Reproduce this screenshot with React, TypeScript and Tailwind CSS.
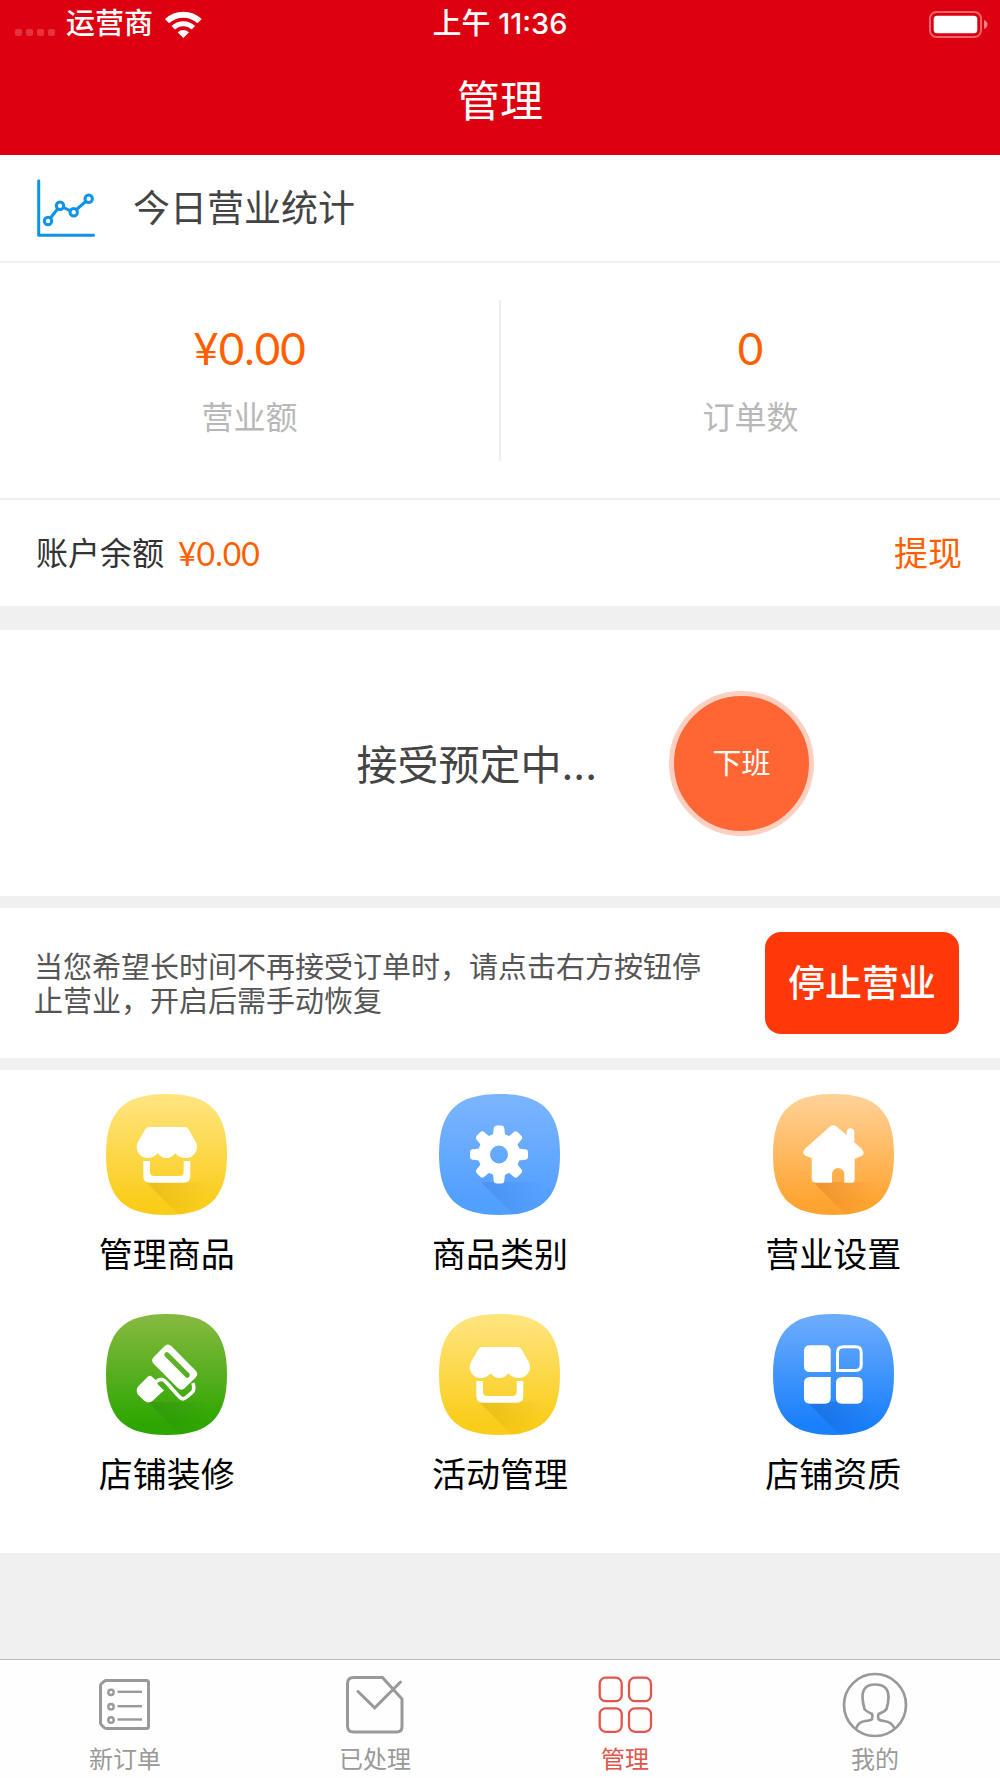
import type { ReactNode } from 'react'

const SQUIRCLE =
  'M60.5 0C103.5 0 121 17.5 121 60.5C121 103.5 103.5 121 60.5 121C17.5 121 0 103.5 0 60.5C0 17.5 17.5 0 60.5 0Z'

/** Rounded gradient tile with the long shadow that falls to the lower right of
    its glyph. `id` keeps the gradient ids unique, the shop tile shows up twice. */
function Tile(props: { id: string; from: string; to: string; shade: string; shadowX: number; children: ReactNode }) {
  const { id, from, to, shade, shadowX, children } = props
  return (
    <svg viewBox="0 0 121 121" className="size-[121px]" aria-hidden="true">
      <defs>
        <linearGradient id={`${id}-bg`} x1="0" y1="0" x2="0" y2="1">
          <stop offset="0.05" stopColor={from} />
          <stop offset="0.9" stopColor={to} />
        </linearGradient>
        <linearGradient id={`${id}-sh`} gradientUnits="userSpaceOnUse" x1="48" y1="86" x2="100" y2="104">
          <stop offset="0" stopColor={shade} stopOpacity="0.45" />
          <stop offset="1" stopColor={shade} stopOpacity="0" />
        </linearGradient>
        <clipPath id={`${id}-clip`}>
          <path d={SQUIRCLE} />
        </clipPath>
      </defs>
      <path d={SQUIRCLE} fill={`url(#${id}-bg)`} />
      <path d={`M${shadowX} 88L${shadowX + 33} 121H121V88Z`} fill={`url(#${id}-sh)`} clipPath={`url(#${id}-clip)`} />
      {children}
    </svg>
  )
}

function ShopTile({ id }: { id: string }) {
  return (
    <Tile id={id} from="#ffe47c" to="#f9cd1a" shade="#d9a90c" shadowX={40}>
      <path
        d="M43 33H78.500Q81 33 82.300 35L89.500 47.500Q91 50 91 53A11 11 0 0 1 80 64Q73 64 69.300 59.300Q66 64 60.500 64Q55 64 51.700 59.300Q48 64 41.500 64A11 11 0 0 1 30.700 53Q30.700 50 32.200 47.500L39.500 35Q40.800 33 43 33Z"
        fill="#fff"
      />
      <path
        d="M37.300 67H44V77.500Q44 82 48.500 82H73.200Q77.700 82 77.700 77.500V67H84.300V82.500Q84.300 88.700 78 88.700H43.600Q37.300 88.700 37.300 82.500Z"
        fill="#fff"
      />
    </Tile>
  )
}

function GearTile() {
  return (
    <Tile id="gear" from="#7ab4ff" to="#519fff" shade="#3b82dd" shadowX={42}>
      <circle cx="60" cy="60.500" r="15" fill="none" stroke="#fff" strokeWidth="12" />
      {[0, 45, 90, 135, 180, 225, 270, 315].map((deg) => (
        <path
          key={deg}
          d="M52.500 42.500Q54 41.500 54.200 39L54.700 34Q55 31.500 57.500 31.500H62.500Q65 31.500 65.300 34L65.800 39Q66 41.500 67.500 42.500L65 48H55Z"
          transform={`rotate(${deg} 60 60.5)`}
          fill="#fff"
        />
      ))}
    </Tile>
  )
}

function HouseTile() {
  return (
    <Tile id="house" from="#ffd094" to="#ffa430" shade="#d97f1e" shadowX={40}>
      <path
        d="M57.300 32.300Q60.300 30 63.300 32.300L73.700 41.300V38A3.800 3.800 0 0 1 81.300 38V48.300L89 55.200Q92.500 59.500 88.500 62L81.700 64.700V85.500Q81.700 88.700 78.500 88.700H71.300V80.200A6.150 6.150 0 0 0 59 80.200V88.700H43Q38.700 88.700 38.700 84.500V64L33 62Q28 59 32 54.700Z"
        fill="#fff"
      />
    </Tile>
  )
}

function RollerTile() {
  return (
    <Tile id="roller" from="#83b93e" to="#2ea602" shade="#2c8a10" shadowX={42}>
      <path
        transform="translate(68.700 53.200) rotate(45)"
        fillRule="evenodd"
        fill="#fff"
        d="M-17 -12.500H17Q22 -12.500 22 -7.500V7.500Q22 12.500 17 12.500H-17Q-22 12.500 -22 7.500V-7.500Q-22 -12.500 -17 -12.500ZM-14.500 -5.800A2.500 2.500 0 0 0 -14.500 -0.800H14.500A2.500 2.500 0 0 0 14.500 -5.800Z"
      />
      <path
        d="M51 67Q56 63.500 59.500 67.500L73 82.500Q76.500 86.500 80 83.500L86 78.500Q89 75.500 87 69"
        fill="none"
        stroke="#fff"
        strokeWidth="3.600"
      />
      <path
        d="M42 62.500Q44.300 60.800 46.300 63L49 65.500L52 67L51.500 70L58 76.500L55 79L47 86.500Q42.700 90.500 38 86.500L32.500 81Q28.500 76 33 71.500Z"
        fill="#fff"
      />
    </Tile>
  )
}

function BlocksTile() {
  return (
    <Tile id="blocks" from="#6aabfd" to="#1a80fb" shade="#1360cc" shadowX={34}>
      <path d="M37 31.300H52Q57.700 31.300 57.700 37V58H37Q31 58 31 52V37Q31 31.300 37 31.300Z" fill="#fff" />
      <path
        d="M70.500 32.800H82.500Q88.200 32.800 88.200 38.500V50.800Q88.200 56.500 82.500 56.500H64.500V38.500Q64.500 32.800 70.500 32.800Z"
        fill="none"
        stroke="#fff"
        strokeWidth="3"
      />
      <path d="M37 63H57.700V84Q57.700 89.700 52 89.700H37Q31 89.700 31 84V69Q31 63 37 63Z" fill="#fff" />
      <path d="M69 63H84Q89.700 63 89.700 69V84Q89.700 89.700 84 89.700H69Q63 89.700 63 84V69Q63 63 69 63Z" fill="#fff" />
    </Tile>
  )
}

const entries = [
  { label: '管理商品', icon: <ShopTile id="goods" /> },
  { label: '商品类别', icon: <GearTile /> },
  { label: '营业设置', icon: <HouseTile /> },
  { label: '店铺装修', icon: <RollerTile /> },
  { label: '活动管理', icon: <ShopTile id="events" /> },
  { label: '店铺资质', icon: <BlocksTile /> },
]

const tabs = [
  {
    label: '新订单',
    icon: (
      <>
        <path
          d="M14.500 8.500H54.500Q56.500 8.500 56.500 10.500V54.500Q56.500 56.500 54.500 56.500H14.500Q13 56.500 12 55.500L9.500 53Q8.500 52 8.500 50.500V14Q8.500 12.500 9.500 11.500L12 9.500Q13 8.500 14.500 8.500Z"
          strokeWidth="3"
        />
        {[20.300, 34.700, 48].map((y) => (
          <g key={y} strokeWidth="2.400">
            <circle cx="19" cy={y} r="2.700" />
            <path d={`M25.500 ${y - 0.500}H50`} />
          </g>
        ))}
      </>
    ),
  },
  {
    label: '已处理',
    icon: (
      <g strokeWidth="3">
        <path d="M11.500 5.500H40.500L60 27V54.500Q60 60 54.500 60H11.500Q5.500 60 5.500 54V11.500Q5.500 5.500 11.500 5.500Z" />
        <path d="M16 19.500L32.700 35.800L58.500 10" strokeLinecap="round" />
      </g>
    ),
  },
  {
    label: '管理',
    icon: (
      <g strokeWidth="2.300">
        <rect x="7.700" y="5.700" width="22" height="23.500" rx="6" />
        <rect x="37" y="5.700" width="22" height="23.500" rx="6" />
        <rect x="7.700" y="36.300" width="22" height="23.500" rx="6" />
        <rect x="37" y="36.300" width="22" height="23.500" rx="6" />
      </g>
    ),
  },
  {
    label: '我的',
    icon: (
      <g strokeWidth="2.700">
        <circle cx="33" cy="33" r="31" />
        <path d="M14 57Q16 50 23 49Q29 48.500 30 47Q31 44 30 42Q23.500 39 22.500 37Q20.500 30 20.500 25Q20.500 12.500 33 12.500Q46.500 12.500 46.500 25Q46.500 31 44.500 37Q43 39.500 36.500 42Q35.500 44 36.500 47Q37.500 48.500 42 49Q50.500 50 52.500 57" />
      </g>
    ),
  },
]

function StatusBar() {
  return (
    <div className="grid h-12 grid-cols-3 items-center text-[29px] leading-8 font-medium">
      <div className="flex items-center pl-[15px]">
        <span className="flex gap-1 pt-4">
          {[0, 1, 2, 3].map((i) => (
            <i key={i} className="size-[7px] rounded-[2px] bg-white/20" />
          ))}
        </span>
        <span className="ml-[11px]">运营商</span>
        <svg viewBox="0 0 37 27" className="ml-3 h-[27px] w-[37px]" aria-hidden="true">
          <g fill="none" stroke="#fff" strokeWidth="6">
            <path d="M2 10.200A23.600 23.600 0 0 1 34.600 10.200" />
            <path d="M8.200 16.800A14.500 14.500 0 0 1 28.400 16.800" strokeWidth="5" />
          </g>
          <path d="M18.300 27L12.700 21.400A8 8 0 0 1 23.900 21.400Z" fill="#fff" />
        </svg>
      </div>
      <time className="text-center">上午 11:36</time>
      <svg viewBox="0 0 59 27" className="mr-3 h-[27px] w-[59px] justify-self-end" aria-hidden="true">
        <rect x="1" y="1" width="51" height="25" rx="6.500" fill="none" stroke="#fff" strokeOpacity="0.4" strokeWidth="2" />
        <rect x="4.700" y="4.700" width="43.600" height="17.600" rx="3.500" fill="#fff" />
        <path d="M55 9Q58.500 10.500 58.500 13.500Q58.500 16.500 55 18Z" fill="#fff" fillOpacity="0.5" />
      </svg>
    </div>
  )
}

function Stat({ value, label }: { value: string; label: string }) {
  return (
    <div className="flex flex-1 flex-col items-center justify-center gap-6">
      <span className="font-[Lato,'Noto_Sans_CJK_SC',sans-serif] text-[44px] leading-12 text-[#ff5f00]">{value}</span>
      <span className="pt-0.5 text-[32px] leading-10 text-[#b8b8b8]">{label}</span>
    </div>
  )
}

export default function App() {
  return (
    <div className="flex min-h-screen flex-col bg-[#f0f0f0] font-[Inter,'Noto_Sans_CJK_SC',sans-serif]">
      <header className="h-[155px] bg-[#dd0010] text-white">
        <StatusBar />
        <h1 className="pt-[25px] text-center text-[43px] leading-14">管理</h1>
      </header>

      <main className="flex-1">
        <section className="bg-white">
          <div className="flex h-[108px] items-center gap-[38px] border-b-2 border-[#f0f0f0] pl-[37px]">
            <svg
              viewBox="0 0 58 58"
              className="size-[58px]"
              fill="none"
              stroke="#0e93e8"
              strokeWidth="3"
              strokeLinecap="round"
              aria-hidden="true"
            >
              <path d="M1.700 1.700V56.300H56.500" strokeLinejoin="round" />
              <path d="M13.500 39L20.500 30M26.500 28.500L33 31.700M39.500 30.500L48.800 22.300" />
              <circle cx="11" cy="42" r="3.700" />
              <circle cx="23" cy="26.700" r="3.700" />
              <circle cx="36.700" cy="33.300" r="3.700" />
              <circle cx="51.700" cy="19.700" r="3.700" />
            </svg>
            <h2 className="pt-0.5 text-[37px] leading-12 text-[#444]">今日营业统计</h2>
          </div>

          <div className="flex h-[237px] border-b-2 border-[#f0f0f0]">
            <Stat value="¥0.00" label="营业额" />
            <div className="my-[37px] w-0.5 bg-[#f0f0f0]" />
            <Stat value="0" label="订单数" />
          </div>

          <div className="flex h-[106px] items-center pt-0.5 pr-[38px] pl-9 text-[32px] leading-10">
            <span className="text-[#333]">账户余额</span>
            <span className="ml-3.5 font-[Lato,'Noto_Sans_CJK_SC',sans-serif] text-[#ff5f00]">¥0.00</span>
            <a href="#withdraw" className="ml-auto text-[34px] text-[#ff5f00]">
              提现
            </a>
          </div>
        </section>

        <section className="mt-6 flex h-[266px] items-center justify-end gap-[72px] bg-white pr-[186px]">
          <p className="pt-1 text-[41px] leading-14 text-[#444]">接受预定中...</p>
          <button className="size-[145px] rounded-full border-5 border-[#ffd0c1] bg-[#ff6633] pt-0.5 text-[29px] leading-10 text-white">
            下班
          </button>
        </section>

        <section className="mt-3 flex h-[150px] items-center gap-10 bg-white pr-[41px] pl-[34px]">
          <p className="flex-1 pt-1 text-[29px] leading-[34px] text-[#555]">
            当您希望长时间不再接受订单时，请点击右方按钮停止营业，开启后需手动恢复
          </p>
          <button className="h-[102px] w-[194px] shrink-0 rounded-2xl bg-[#ff380a] pt-0.5 text-[37px] leading-12 font-medium text-white">
            停止营业
          </button>
        </section>

        <section className="mt-3 grid grid-cols-3 gap-y-[31px] bg-white pt-6 pb-[50px]">
          {entries.map(({ label, icon }) => (
            <a key={label} href="#" className="flex flex-col items-center gap-3 text-[34px] leading-14 text-black">
              {icon}
              {label}
            </a>
          ))}
        </section>
      </main>

      <nav className="grid h-[119px] grid-cols-4 border-t border-[#b8b8b8] bg-[#fefefe]">
        {tabs.map(({ label, icon }) => (
          <a
            key={label}
            href="#"
            aria-current={label === '管理' ? 'page' : undefined}
            className="flex flex-col items-center gap-1.5 pt-3 text-2xl leading-8 text-[#999] aria-[current=page]:text-[#e0554c]"
          >
            <svg viewBox="0 0 66 66" className="size-[66px]" fill="none" stroke="currentColor" aria-hidden="true">
              {icon}
            </svg>
            {label}
          </a>
        ))}
      </nav>
    </div>
  )
}
